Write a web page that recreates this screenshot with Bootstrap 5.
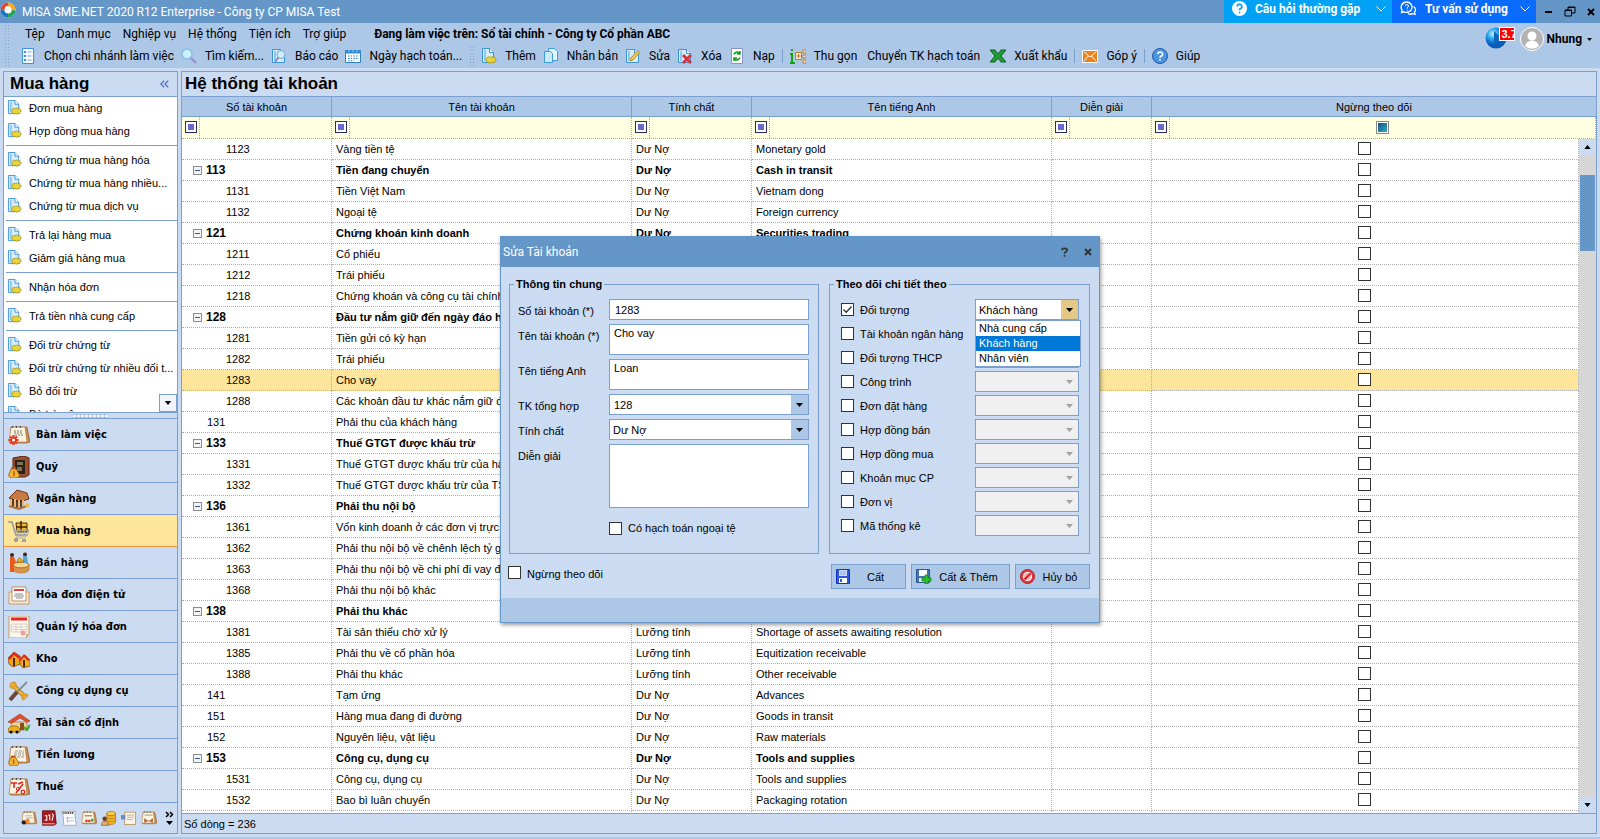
<!DOCTYPE html>
<html lang="vi">
<head>
<meta charset="utf-8">
<meta name="viewport" content="width=device-width, initial-scale=1">
<title>MISA SME.NET 2020 R12 Enterprise</title>
<link rel="stylesheet" href="https://cdn.jsdelivr.net/npm/bootstrap@5.3.0/dist/css/bootstrap.min.css">
<style>
:root{--bar:#6596c8;--tool:#adc7e7;--face:#cbdbf1;--line:#7ba0cd;--pick:#fee59c}
body{font:11px/16px "Liberation Sans",Arial,sans-serif;color:#000;background:var(--face);border-bottom:2px solid var(--tool)}
.seg{font-family:Roboto,"Noto Sans",sans-serif;font-size:12px}
svg{display:block;flex:none}
button{background:none;border:0;padding:0;color:inherit}
.titlebar{background:var(--bar);height:23px}
.promo{height:23px;font-weight:700;color:#fff;padding:0 6px 6px 8px;gap:8px;text-align:left}
.promo.faq{background:#00a2f5;width:168px}.promo.chat{background:#0a6cff;width:144px}
.toolarea{background:var(--tool);height:45px}
.grip{width:5px;height:20px;background:radial-gradient(circle,#8da2bd 1px,transparent 1px) 0 0/3px 3px}
.menu-row{height:22px;gap:12px}
.menu-row a,.side a{color:#000;text-decoration:none}
.tool-row{height:22px;gap:7px}
.tool-row button{display:flex;align-items:center;gap:8px;white-space:nowrap}
.tool-row .plain{padding:0 3px}
.tsep{width:1px;height:14px;background:var(--line)}
.panel{border:1px solid var(--line);background:var(--face)}
.panel-title{height:25px;border-bottom:1px solid var(--line);font:700 17px/24px "Liberation Sans",Arial,sans-serif;margin:0}
.side{width:175px;flex:none}
.side-list{background:#fff;overflow:hidden}
.side-list a{display:flex;align-items:center;height:23px;padding:0 0 2px 3px;gap:7px;white-space:nowrap}
.side-list hr{margin:2px 0 3px 2px;border:0;border-top:1px solid var(--line);opacity:1}
.more-btn{right:0;bottom:0;width:18px;height:18px;border:1px solid var(--line);background:#f1f5fb;display:flex;align-items:center;justify-content:center}
.splitter{height:7px;border:solid var(--line);border-width:1px 0;background:radial-gradient(circle,#fff 1px,#9ab4d8 2px) center/4px 4px repeat-x content-box;padding:0 69px}
.nav-big a{display:flex;align-items:center;gap:6px;height:32px;padding-left:4px;border-bottom:1px solid var(--line);font:700 11px/16px "DejaVu Sans Condensed","Noto Sans",sans-serif}
.nav-big a.on{background:var(--pick);border-bottom-color:#f0953c}
.mini{height:30px;padding-left:17px;gap:4px}
.grid-wrap{background:#fff;overflow:hidden}
.acct{table-layout:fixed;border-collapse:separate;border-spacing:0;width:100%}
.acct th{height:20px;padding:0;font-weight:400;text-align:center;background:var(--tool);border-right:1px solid var(--line);border-bottom:1px solid var(--line);line-height:16px}
.acct th:last-child{border-right:0}
.acct td{height:21px;padding:0 0 0 4px;border-bottom:1px dotted #b0b0b0;border-right:1px dotted #b0b0b0;line-height:16px;white-space:nowrap;overflow:hidden}
.acct td.gut{border:0;background:#fff}
.acct td.chk{padding:3px 1px 0 0;vertical-align:top}
.acct .filter td{height:22px;background:#ffffe1;padding:0;border-bottom-color:#a8a8a8}
.acct .hit td:not(.gut){background:var(--pick)}
.acct .grp td{font-weight:700}
.acct .grp td:first-child{font-size:12px}
.acct td.lv2{padding-left:25px}.acct td.lv3{padding-left:44px}.acct td.grpno{padding-left:11px}
.fop{width:18px;height:21px;border-right:1px dotted #a8a8a8;padding:0 0 1px 3px;display:flex;align-items:center}
.fop i{width:12px;height:12px;border:1px solid #2c2c66;background:#6868cc;box-shadow:inset 0 0 0 2px #fff}
.tree{width:9px;height:9px;border:1px solid #8d8d8d;background:linear-gradient(#2f5aa8,#2f5aa8) center/5px 1px no-repeat #f4f4f4}
input[type=checkbox]{appearance:none;width:13px;height:13px;margin:0;border:1px solid #333;background:#fff;flex:none;display:block}
input[type=checkbox]:checked{background:url("data:image/svg+xml,%3Csvg xmlns='http://www.w3.org/2000/svg' viewBox='0 0 11 11'%3E%3Cpath d='M1.5 5.5 4.2 8.2 9.5 2.5' fill='none' stroke='%23333' stroke-width='1.3'/%3E%3C/svg%3E") #fff}
input.tri[type=checkbox]{border-color:#888;background:linear-gradient(135deg,#0d4a78,#3fb0c8);box-shadow:inset 0 0 0 1px #fff}
.vbar{top:42px;right:0;bottom:0;width:17px;background:#d6d6d6}
.vbar span{display:flex;align-items:center;justify-content:center;height:16px;background:var(--face)}
.thumb{top:36px;left:1px;right:1px;height:76px;background:var(--bar)}
.status{height:20px;border-top:1px solid var(--line);padding-left:2px}
.dlg{top:236px;width:600px;background:var(--face);border:1px solid var(--bar);box-shadow:1px 2px 4px rgba(0,0,0,.4)}
.dlg-head{height:30px;background:var(--bar);padding:0 7px 0 2px}
.dlg-foot{height:24px;background:var(--tool)}
fieldset.box{border:1px solid var(--line);height:277px}
fieldset.box legend{float:none;width:auto;margin:0 0 7px 4px;padding:0 2px;font-size:11px;font-weight:700;line-height:15px}
.fgrid{display:grid;grid-template-columns:91px 200px;row-gap:4px;padding-left:8px}
.fgrid label{padding-top:4px}
.ctl{display:block;width:100%;height:21px;border:1px solid var(--line);border-radius:0;background-color:#fff;padding:0 5px;font:11px/14px "Liberation Sans",Arial,sans-serif;color:#000;resize:none;outline:0}
textarea.ctl{padding:1px 4px;height:31px}
textarea.ctl.tall{height:64px}
select.ctl{appearance:none;padding:0 20px 0 3px;opacity:1;background-image:url("data:image/svg+xml,%3Csvg xmlns='http://www.w3.org/2000/svg' width='17' height='19'%3E%3Cpath d='M0 0h17v19H0z' fill='%23adc7e7'/%3E%3Cpath d='M5 8h7l-3.500 4z'/%3E%3C/svg%3E");background-repeat:no-repeat;background-position:right top}
select.ctl.open{background-image:url("data:image/svg+xml,%3Csvg xmlns='http://www.w3.org/2000/svg' width='17' height='19'%3E%3Cpath d='M0 0h17v19H0z' fill='%23e3c985'/%3E%3Cpath d='M5 8h7l-3.500 4z'/%3E%3C/svg%3E")}
select.ctl:disabled{background-color:#f0f0f0;background-image:url("data:image/svg+xml,%3Csvg xmlns='http://www.w3.org/2000/svg' width='17' height='19'%3E%3Cpath d='M5 8h7l-3.500 4z' fill='%23a0a0a0'/%3E%3C/svg%3E")}
.track{display:grid;row-gap:3px;padding:0 10px 0 11px}
.track .line{display:grid;grid-template-columns:13px 1fr 104px;column-gap:6px;align-items:start;height:21px}
.track .line input{margin-top:4px}
.track .line label{padding-top:3px}
.opts{top:21px;left:0;width:106px;border:1px solid var(--line);background:#fff;list-style:none;margin:0;padding:0;line-height:15px;z-index:2}
.opts li{padding-left:3px}
.opts .sel{background:#0078d7;color:#fff}
.act{height:25px;border:1px solid var(--line);background:var(--tool);display:flex;align-items:center;padding:0 4px}
.act span{flex:1;text-align:center}
.flag{left:14px;top:0;width:16px;height:14px;background:#f00;color:#fff;border:1px solid #fff;font:700 11px/12px "Liberation Sans",sans-serif;padding-left:2px;overflow:hidden;white-space:nowrap}
</style>
</head>
<body class="d-flex flex-column vh-100 overflow-hidden position-relative">
<svg width="0" height="0" class="position-absolute">
 <defs>
  <symbol id="pg" viewBox="0 0 16 16"><path d="M1.500 1.500h8l4 4v9h-12z" fill="#d6ecfb" stroke="#3c93d6"/><path d="M9.500 1.500v4h4" fill="#fff" stroke="#3c93d6"/><path d="M3 3h2v10H3z" fill="#8cc8f0"/></symbol>
  <symbol id="doc" viewBox="0 0 16 16"><path d="M1.500.500h7l4 4v10h-11z" fill="#d6ecfb" stroke="#3c93d6"/><path d="M8.500.500v4h4" fill="#fff" stroke="#3c93d6"/><path d="M3 2h2v11H3z" fill="#8cc8f0"/><path d="M5.500 10l2-1.200 1.200.5 1.800-.8 1.400.8 2-.2v1.400l1.600 1.200-1.600 1.200-.2 1.500-1.900-.1-1.500.9-1.600-.8-1.800.5-.5-1.300-1.800-.9 1.200-1.200z" fill="#e9d437" stroke="#a8941c" stroke-width=".8"/></symbol>
  <symbol id="down" viewBox="0 0 8 5"><path d="M0 0h8L4 5z"/></symbol>
 </defs>
</svg>

<header>
 <div class="titlebar seg d-flex align-items-center text-white">
  <svg width="18" height="18" viewBox="0 0 18 18" class="mb-1"><circle cx="8" cy="9" r="7.500" fill="#fff"/><path d="M8 1.500A7.500 7.500 0 0 0 .5 9l4 .5C4.500 6 6 5 8 5z" fill="#e8452c"/><path d="M8 1.500A7.500 7.500 0 0 1 15.500 9l-4 1C12 6 10 5.500 8 5z" fill="#f7a823"/><path d="M15.500 9A7.500 7.500 0 0 1 8 16.500l-1-4c3 .5 4.500-1 4.500-3z" fill="#1ea65a"/><path d="M8 16.500A7.500 7.500 0 0 1 .5 9l4 .3c0 2 1 3 3.500 3.200z" fill="#1b74c5"/></svg>
  <span class="ps-1 flex-fill">MISA SME.NET 2020 R12 Enterprise - Công ty CP MISA Test</span>
  <button class="promo faq d-flex align-items-center"><svg width="15" height="15" viewBox="0 0 16 16"><circle cx="8" cy="8" r="8" fill="#fff"/><path d="M5.500 6a2.500 2.300 0 1 1 3.500 2c-.8.5-1 .8-1 1.800M8 11.500v1.600" fill="none" stroke="#00a2f5" stroke-width="1.700"/></svg><span class="flex-fill">Câu hỏi thường gặp</span><svg width="10" height="6" viewBox="0 0 10 6"><path d="M.5.500 5 5 9.500.500" fill="none" stroke="#fff"/></svg></button>
  <button class="promo chat d-flex align-items-center"><svg width="17" height="15" viewBox="0 0 17 15"><path d="M6.500 1a5.500 5.200 0 1 1-2.500 9.800L1.500 11.500l.6-2.400A5.500 5.200 0 0 1 6.500 1z" fill="none" stroke="#fff" stroke-width="1.300"/><path d="M13.500 5.500c2.500 1.500 2.500 4 1 5.600l.6 2.200-2.300-.6c-1.500.7-3.500.6-4.800-.2" fill="none" stroke="#fff" stroke-width="1.300"/><path d="M5.300 5a1.600 1.500 0 1 1 2 1.500v1M7.300 8.500v1" fill="none" stroke="#fff"/></svg><span class="flex-fill">Tư vấn sử dụng</span><svg width="10" height="6" viewBox="0 0 10 6"><path d="M.5.500 5 5 9.500.500" fill="none" stroke="#fff"/></svg></button>
  <div class="d-flex align-items-center justify-content-around ps-1" style="width:64px">
   <button aria-label="Thu nhỏ"><svg width="8" height="10" viewBox="0 0 8 10"><path d="M0 4h7v2H0z"/></svg></button>
   <button aria-label="Khôi phục"><svg width="12" height="11" viewBox="0 0 12 11"><path d="M1 4h6.500v6H1zM4 4V1h7v6H7.500M1 4.500h6.500M4 1.500h7" fill="none" stroke="#000"/></svg></button>
   <button aria-label="Đóng"><svg width="8" height="8" viewBox="0 0 8 8"><path d="M1 1l6 6M7 1L1 7" stroke="#000" stroke-width="2"/></svg></button>
  </div>
 </div>
 <div class="toolarea seg position-relative">
  <nav class="menu-row d-flex align-items-center ps-1">
   <i class="grip me-n2"></i>
   <a href="#" class="ps-1">Tệp</a><a href="#">Danh mục</a><a href="#">Nghiệp vụ</a><a href="#">Hệ thống</a><a href="#">Tiện ích</a><a href="#">Trợ giúp</a>
   <b class="ps-3">Đang làm việc trên: Sổ tài chính - Công ty Cổ phần ABC</b>
  </nav>
  <div class="tool-row d-flex align-items-center ps-1" id="tools"></div>
  <div class="position-absolute d-flex align-items-center" style="right:8px;top:4px">
   <div class="position-relative" style="width:35px;height:24px"><svg width="22" height="22" viewBox="0 0 22 22"><defs><radialGradient id="gl" cx=".35" cy=".3"><stop offset="0" stop-color="#c4f1ff"/><stop offset=".5" stop-color="#2ba5ee"/><stop offset="1" stop-color="#0a5cb8"/></radialGradient></defs><circle cx="11" cy="11" r="10.500" fill="url(#gl)"/><path d="M9 4l8 8-6 5-2-2z" fill="#0c65bd"/></svg><span class="flag position-absolute">3.7</span></div>
   <svg width="24" height="24" viewBox="0 0 24 24"><circle cx="12" cy="12" r="11.500" fill="#b2b2b2" stroke="#fff"/><circle cx="12" cy="9" r="4.500" fill="#fff"/><path d="M5 19c1-7 13-7 14 0a10 10 0 0 1-14 0z" fill="#fff"/></svg>
   <button class="fw-bold d-flex align-items-center" style="padding-left:3px;gap:5px">Nhung<svg width="5" height="3" viewBox="0 0 8 5"><use href="#down"/></svg></button>
  </div>
 </div>
</header>

<main class="d-flex flex-fill overflow-hidden" style="padding:3px;gap:3px">
 <aside class="panel side d-flex flex-column">
  <h1 class="panel-title d-flex align-items-center justify-content-between pe-1" style="padding-left:6px">Mua hàng<svg width="9" height="8" viewBox="0 0 11 9" class="me-1"><path d="M5 .5 1 4.500l4 4M10 .5 6 4.500l4 4" fill="none" stroke="#4a72b8" stroke-width="1.500"/></svg></h1>
  <div class="side-list flex-fill position-relative" id="list" style="height:0"></div>
  <div class="splitter"></div>
  <nav class="nav-big" id="nav"></nav>
  <div class="mini d-flex align-items-center" id="mini"></div>
 </aside>

 <section class="panel flex-fill d-flex flex-column overflow-hidden">
  <h2 class="panel-title" style="padding-left:3px">Hệ thống tài khoản</h2>
  <div class="grid-wrap flex-fill position-relative" style="height:0">
   <table class="acct">
    <colgroup><col style="width:150px"><col style="width:300px"><col style="width:120px"><col style="width:300px"><col style="width:100px"><col><col style="width:17px"></colgroup>
    <thead>
     <tr><th>Số tài khoản</th><th>Tên tài khoản</th><th>Tính chất</th><th>Tên tiếng Anh</th><th>Diễn giải</th><th colspan="2">Ngừng theo dõi</th></tr>
     <tr class="filter"><td><div class="fop"><i></i></div></td><td><div class="fop"><i></i></div></td><td><div class="fop"><i></i></div></td><td><div class="fop"><i></i></div></td><td><div class="fop"><i></i></div></td><td colspan="2"><div class="d-flex align-items-center"><div class="fop"><i></i></div><input type="checkbox" class="tri mx-auto" aria-label="Lọc ngừng theo dõi"></div></td></tr>
    </thead>
    <tbody id="rows"></tbody>
   </table>
   <div class="vbar position-absolute d-flex flex-column justify-content-between"><span><svg width="7" height="4" viewBox="0 0 8 5"><path d="M0 5h8L4 0z"/></svg></span><div class="thumb position-absolute"></div><span><svg width="7" height="4" viewBox="0 0 8 5"><use href="#down"/></svg></span></div>
  </div>
  <footer class="status d-flex align-items-center">Số dòng = 236</footer>
 </section>
</main>

<section class="dlg position-absolute start-50 translate-middle-x" role="dialog" aria-labelledby="dt">
 <div class="dlg-head d-flex align-items-center">
  <span id="dt" class="seg text-white flex-fill">Sửa Tài khoản</span>
  <button aria-label="Trợ giúp" class="me-3"><svg width="7" height="10" viewBox="0 0 8 11"><path d="M1 3.500C1 .5 7 .5 7 3.500 7 5.500 4 5 4 7.500M4 8.800V11" fill="none" stroke="#333" stroke-width="2"/></svg></button>
  <button aria-label="Đóng"><svg width="8" height="8" viewBox="0 0 8 8"><path d="M1 1l6 6M7 1L1 7" stroke="#333" stroke-width="2"/></svg></button>
 </div>
 <div class="d-flex justify-content-between" style="padding:10px 9px 0 8px">
  <fieldset class="box" style="width:310px">
   <legend>Thông tin chung</legend>
   <div class="fgrid">
    <label for="f1">Số tài khoản (*)</label><input id="f1" class="ctl" value="1283">
    <label for="f2">Tên tài khoản (*)</label><textarea id="f2" class="ctl">Cho vay</textarea>
    <label for="f3">Tên tiếng Anh</label><textarea id="f3" class="ctl">Loan</textarea>
    <label for="f4">TK tổng hợp</label><select id="f4" class="ctl ps-1"><option>128</option></select>
    <label for="f5">Tính chất</label><select id="f5" class="ctl"><option>Dư Nợ</option></select>
    <label for="f6">Diễn giải</label><textarea id="f6" class="ctl tall"></textarea>
    <div></div><div class="d-flex align-items-center pt-2" style="gap:6px"><input type="checkbox" id="f7"><label for="f7" class="p-0">Có hạch toán ngoại tệ</label></div>
   </div>
  </fieldset>
  <fieldset class="box" style="width:261px">
   <legend>Theo dõi chi tiết theo</legend>
   <div class="track" id="track"></div>
  </fieldset>
 </div>
 <div class="d-flex" style="padding:10px 9px 9px 7px;gap:5px">
  <div class="flex-fill d-flex align-items-start" style="gap:6px;padding-top:2px"><input type="checkbox" id="stop"><label for="stop">Ngừng theo dõi</label></div>
  <button class="act" style="width:75px"><svg width="14" height="15" viewBox="0 0 14 15"><path d="M.5.500h13v14H.5z" fill="#2c59e0" stroke="#1a30b8"/><path d="M3 1h8v6H3z" fill="#cfdcf8"/><path d="M3 9h8v5H3z" fill="#fff"/><path d="M4 10h2v3H4z" fill="#2c59e0"/><path d="M4 3h6M4 5h6" stroke="#8fa8e8"/></svg><span>Cất</span></button>
  <button class="act" style="width:99px"><svg width="16" height="15" viewBox="0 0 16 15"><path d="M.5.500h13v13H.5z" fill="#3f78b8" stroke="#2a568c"/><path d="M3 1h8v6H3z" fill="#fff"/><path d="M3 9h6v4H3z" fill="#dce6f2"/><path d="M9 6h3v3h3v3h-3v3H9v-3H6V9h3z" fill="#24c424" stroke="#178a17" stroke-width=".8"/></svg><span>Cất &amp; Thêm</span></button>
  <button class="act" style="width:75px"><svg width="15" height="15" viewBox="0 0 15 15"><circle cx="7.500" cy="7.500" r="7" fill="#e0383e" stroke="#b81f28"/><circle cx="7.500" cy="7.500" r="4" fill="#f4b0a8" stroke="#fff" stroke-width="1.200"/><path d="M4.500 10.500l6-6" stroke="#c8232c" stroke-width="2"/></svg><span>Hủy bỏ</span></button>
 </div>
 <div class="dlg-foot"></div>
</section>

<script>
const $ = id => document.getElementById(id);
const svg = (s, vb, body) => `<svg width="${s}" height="${s}" viewBox="0 0 ${vb} ${vb}">${body}</svg>`;
const pg = '<use href="#pg" width="16" height="16"/>';
const T = {
 list: '<path d="M2.500.500h11v15h-11z" fill="#f4faff" stroke="#3c93d6"/><path d="M4 3h2v2H4zM4 7h2v2H4zM4 11h2v2H4z" fill="#3c93d6"/><path d="M7.500 4h4M7.500 8h4M7.500 12h4" stroke="#7aa8cc"/>',
 find: '<circle cx="6" cy="6" r="5" fill="#cdeefc" stroke="#7fbfe4" stroke-width="1.400"/><path d="M10 10l5 5" stroke="#9a8fd0" stroke-width="2.400"/>',
 rep: pg + '<circle cx="10" cy="6.500" r="4" fill="#cdeefc" stroke="#7aa6cc"/><path d="M7.500 9.500L4 14" stroke="#8c86c4" stroke-width="2"/>',
 cal: '<path d="M.5 2.500h15v12H.5z" fill="#fff" stroke="#2f7fc0"/><path d="M.5 2.500h15v3H.5z" fill="#2f8fd6"/><path d="M4 1v3M8 1v3M12 1v3" stroke="#9ccdf0"/><path d="M3 8h11M3 10.500h11M3 12.800h6" stroke="#2f7fc0" stroke-dasharray="1.500 1.200"/>',
 add: '<use href="#doc" width="16" height="16"/>',
 dup: '<path d="M5.500.500h6l3 3v9h-9z" fill="#e4f4fe" stroke="#3c9ddc"/><path d="M1.500 3.500h6l2 2v9h-8z" fill="#cbeafc" stroke="#3c9ddc"/>',
 edit: pg + '<path d="M5 13l1-3 6.500-7.500 2.200 2L8 12z" fill="#f3c84a" stroke="#a8801c" stroke-width=".8"/>',
 del: pg + '<path d="M6 7l8 8M14 7l-8 8" stroke="#d8343a" stroke-width="3"/>',
 load: '<path d="M2.500.500h11v15h-11z" fill="#fff" stroke="#8a93c4"/><path d="M5 6.500c1-3 5-3 5.500-1M11 3v3H8M11 9.500c-1 3-5 3-5.500 1M5 13v-3h3" fill="none" stroke="#17a02c" stroke-width="1.600"/>',
 fold: '<path d="M0 6h3M2 6v9M0 15h5M1 2h2" stroke="#16a016" stroke-width="2"/><path d="M5.500 4.500h6v7h-6zM13 2h3v3h-3zM13 7h3v3h-3zM13 12h3v3h-3z" fill="#fbe9c8" stroke="#c07c34"/><path d="M8.500 6v4M6.500 8h4" stroke="#c07c34"/>',
 xls: '<path d="M0 2h5l3 4 3-4h5l-5 6 5 6h-5l-3-4-3 4H0l5-6z" fill="#1f9a34" stroke="#0c6420"/>',
 mail: '<path d="M.5 2.500h15v12H.5z" fill="#f0821c" stroke="#fff"/><path d="M2 4l6 5 6-5M2 13l4.500-5M14 13L9.500 8" fill="none" stroke="#fff"/>',
 help: '<circle cx="8" cy="8" r="7.500" fill="#4a94e0" stroke="#1f5aa8"/><path d="M5.700 6.300a2.400 2.200 0 1 1 3.200 2c-.7.400-.9.700-.9 1.500M8 11v1.600" fill="none" stroke="#fff" stroke-width="1.600"/>'
};
$('tools').innerHTML = [['grip','me-1'],['list','Chọn chi nhánh làm việc'],['find','Tìm kiếm...'],['rep','Báo cáo'],['cal','Ngày hạch toán...'],['grip',''],['add','Thêm'],['dup','Nhân bản'],['edit','Sửa'],['del','Xóa'],['load','Nạp'],['sep'],['fold','Thu gọn'],['','Chuyển TK hạch toán'],['xls','Xuất khẩu'],['sep'],['mail','Góp ý'],['sep'],['help','Giúp']]
 .map(([k,t]) => k==='grip' ? `<i class="grip ${t}"></i>` : k==='sep' ? '<i class="tsep"></i>' : k ? `<button>${svg(16,16,T[k])}${t}</button>` : `<button class="plain">${t}</button>`).join('');

$('list').innerHTML = ['Đơn mua hàng','Hợp đồng mua hàng','','Chứng từ mua hàng hóa','Chứng từ mua hàng nhiều...','Chứng từ mua dịch vụ','','Trả lại hàng mua','Giảm giá hàng mua','','Nhận hóa đơn','','Trả tiền nhà cung cấp','','Đối trừ chứng từ','Đối trừ chứng từ nhiều đối t...','Bỏ đối trừ','Bù trừ công nợ']
 .map(t => t ? `<a href="#"><svg width="15" height="15"><use href="#doc"/></svg>${t}</a>` : '<hr>').join('')
 + '<button class="more-btn position-absolute" aria-label="Xem thêm"><svg width="8" height="4" viewBox="0 0 8 5"><use href="#down"/></svg></button>';

const card = '<path d="M3 3h16l3 15-4 1H2z" fill="#c98a4c" stroke="#8c5a2c" stroke-width=".7"/><path d="M3 3h14l2 15H1z" fill="#fbf3e0" stroke="#b48a58" stroke-width=".8"/><path d="M4 4l1-2M8 4l1-2M12 4l1-2" stroke="#333"/>';
const bag = '<path d="M3 13h5l3 5c1 3-1 4-5 4s-6-1-5-4z" fill="#f2b632" stroke="#8f5c10" stroke-width=".8"/><path d="M3 12h5" stroke="#c4501c" stroke-width="1.600"/><path d="M6 15v5" stroke="#a02c10"/>';
const N = {
 desk: card+'<path d="M6 7h9M6 9h9M7 11h8" stroke="#777" stroke-dasharray="2 1"/><g stroke="#e8331c" stroke-width="2.200"><path d="M5.500 11v10M.5 16h10M2 12.500l7 7M9 12.500l-7 7"/></g><circle cx="5.500" cy="16" r="1.600" fill="#fff"/>',
 safe: '<path d="M5 2l11-2 5 2v17l-4 2H5z" fill="#9c4e30" stroke="#54240f"/><path d="M7 4h10v14H7z" fill="#2c2018"/><path d="M9 6h6v3H9zM9 11h5v4H9z" fill="#7c7350"/>'+bag,
 bank: '<path d="M1 10L9 2l10 3 2 6-9 3z" fill="#c87a44" stroke="#6e3614"/><path d="M3 11v7M7 11v8M11 12v8M15 12v7" stroke="#eab878" stroke-width="2.200"/><path d="M5 11v8M9 12v8M13 12v8" stroke="#3a1c0c" stroke-width="1.600"/><path d="M1 18l10 3 10-4" fill="none" stroke="#b0733c" stroke-width="2"/><circle cx="19" cy="17" r="2" fill="#f6be3a"/>',
 cart: '<path d="M0 2h4l4 13h11" fill="none" stroke="#999" stroke-width="1.600"/><path d="M8 3h11v9H9z" fill="#f0b92c" stroke="#42300c"/><path d="M13 1v11M8 7h11" stroke="#42210c" stroke-width="1.500"/><path d="M6 10h15l-2 6H8zM9 10l1 6M13 10v6M17 10l-1 6" fill="none" stroke="#a6a6ae"/><path d="M8 18h10" stroke="#aaa"/><circle cx="8" cy="20" r="1.500" fill="#ccc" stroke="#777"/><circle cx="16" cy="21" r="1.500" fill="#ccc" stroke="#777"/>',
 sell: '<ellipse cx="13" cy="13" rx="8" ry="3" fill="#f6d58c" stroke="#a9692a"/><path d="M5 13v5c2 4 14 4 16 0v-5c-2 4-14 4-16 0z" fill="#d9924a" stroke="#a9692a" stroke-width=".6"/><circle cx="4" cy="3" r="2" fill="#4a2412"/><path d="M2 5h4l2 5-2 2v8H2z" fill="#ea5a1c"/><circle cx="17" cy="2.500" r="2" fill="#4a2412"/><path d="M15 4h4l1 7h-5z" fill="#5aa6c8"/><path d="M9 10c1-5 3-5 4-3s3 0 3 3z" fill="#efae22" stroke="#7a420c" stroke-width=".5"/>',
 einv: '<path d="M1 8h20v12H1z" fill="#f6ead4" stroke="#c99a62"/><path d="M4 3h14v14H4z" fill="#fff" stroke="#b98f5e"/><path d="M6 6h10" stroke="#e02c2c" stroke-width="1.800"/><path d="M7 10h8M6 12h10M8 14h7" stroke="#888"/>',
 inv: '<path d="M1 0h20v18l-3 4H1z" fill="#fdf8ec" stroke="#c99a62"/><path d="M3 3h16" stroke="#e0282c" stroke-width="3"/><path d="M3 8h16v8H3zM3 11h16M3 13.500h16M8 8v8M13 8v8" fill="none" stroke="#c8c2bc" stroke-width=".7"/><circle cx="15" cy="17" r="2.500" fill="#eca0a0"/><path d="M21 18h-3v4z" fill="#d8a86c"/>',
 kho: '<path d="M0 10l6-6 6 4v8l-7 3-4-3z" fill="#f0a818" stroke="#7a3c08" stroke-width=".7"/><path d="M0 10l6-6 7 5-2 2-5-4-4 5z" fill="#dc2c1c"/><path d="M12 12l5-5 5 5v6l-7 2-3-3z" fill="#f0b020" stroke="#7a3c08" stroke-width=".7"/><path d="M11 12l5-6 6 6-2 1-4-4-4 5z" fill="#dc2c1c"/><path d="M6 10v8M16 12v7" stroke="#4c2606" stroke-width="2"/>',
 tool: '<path d="M3 3l15 15" stroke="#8a5a1c" stroke-width="4.200"/><path d="M3 3l15 15" stroke="#f2b63c" stroke-width="3"/><path d="M2 6a3 3 0 1 0 4-4M20 16a3 3 0 1 0-4 4" fill="none" stroke="#e3a22c" stroke-width="2.200"/><path d="M19 2L9 12" stroke="#85909e" stroke-width="2"/><path d="M9 12l-7 8" stroke="#6a4638" stroke-width="4"/>',
 home: '<path d="M3 10h16v8H4z" fill="#f1d3a0" stroke="#9a6838" stroke-width=".7"/><path d="M0 10L12 2l10 7-3 1-7-4-8 5z" fill="#e4502c" stroke="#9a2c14" stroke-width=".6"/><path d="M12 11h4v7h-4z" fill="#8a4c20"/><path d="M0 17l3-3h6l3 3v3H0z" fill="#e9b21c" stroke="#7c5408" stroke-width=".7"/><circle cx="3" cy="20" r="1.500"/><circle cx="9" cy="20" r="1.500"/><path d="M16 15l3 3 3-5" fill="none" stroke="#3ca42c" stroke-width="2"/>',
 pay: card+'<path d="M7 7h9M6 9h10M6 11h10M9 13h8" stroke="#999" stroke-dasharray="3 1"/>'+'<g transform="translate(0 1) scale(.95)">'+bag+'</g>',
 tax: card+'<path d="M3 7h6M6 7v5M10 8l5-2M8 17l7-9" stroke="#e0282c" stroke-width="1.600"/><circle cx="10" cy="13" r="1.600" fill="none" stroke="#e0282c"/><circle cx="15" cy="16" r="1.800" fill="none" stroke="#e0282c" stroke-width="1.300"/>'
};
$('nav').innerHTML = [['desk','Bàn làm việc'],['safe','Quỹ'],['bank','Ngân hàng'],['cart','Mua hàng'],['sell','Bán hàng'],['einv','Hóa đơn điện tử'],['inv','Quản lý hóa đơn'],['kho','Kho'],['tool','Công cụ dụng cụ'],['home','Tài sản cố định'],['pay','Tiền lương'],['tax','Thuế']]
 .map(([k,t]) => `<a href="#"${k==='cart'?' class="on"':''}>${svg(22,22,N[k])}${t}</a>`).join('');
const M = [
 card+'<path d="M6 8h9M7 11h9" stroke="#999"/><circle cx="4" cy="17" r="3" fill="#222"/><circle cx="9" cy="15" r="3" fill="#f08a1c"/>',
 '<path d="M2 1h17l2 18-3 2H2z" fill="#a8181c" stroke="#5e0c10"/><path d="M5 8h3v6H5M10 7h2v7M15 5l2 2-2 8" fill="none" stroke="#fff" stroke-width="1.500"/><path d="M2 19h17" stroke="#fff"/>',
 '<path d="M1 2h19l-1 5 2 14H4L3 8z" fill="#fff" stroke="#999"/><path d="M3 4h15" stroke="#222" stroke-width="2" stroke-dasharray="2 1"/><path d="M6 11h11M7 15h11M9 9v9" stroke="#aab"/>',
 card+'<path d="M5 8h10" stroke="#444"/><path d="M6 15h3M10 15h3" stroke="#e0281c" stroke-width="3"/><path d="M14 14h3" stroke="#2ca040" stroke-width="4"/>',
 '<ellipse cx="14" cy="5" rx="6" ry="3" fill="#f8cc44" stroke="#a87410"/><path d="M8 5v12c2 4 10 4 12 0V5c-2 4-10 4-12 0zM8 10c2 3 10 3 12 0M8 14c2 3 10 3 12 0" fill="#f2b42c" stroke="#a87410"/><circle cx="5" cy="12" r="3" fill="#6a3c1c"/><path d="M0 21c0-7 10-7 11 0z" fill="#e4b070" stroke="#8a5a2c"/>',
 '<path d="M5 3h15v17H5z" fill="#fdf6e6" stroke="#b5814c"/><path d="M8 7h10M8 10h10M8 13h8" stroke="#999"/><path d="M0 7h6v6H0z" fill="#6a88c4"/>',
 card+'<path d="M5 7h11" stroke="#777"/><path d="M5 12l4 3-4 2zM16 12l-4 3 4 2zM9 15h3" fill="#b0642c" stroke="#b0642c"/>'];
$('mini').innerHTML = M.map(b => svg(16,22,b)).join('') + '<svg width="9" height="14" viewBox="0 0 9 14" class="ms-1"><path d="M1 1l2.500 2.500L1 6M5 1l2.500 2.500L5 6" fill="none" stroke="#000" stroke-width="1.500"/><path d="M1 10h7l-3.500 4z"/></svg>';

const D = 'Dư Nợ', L = 'Lưỡng tính';
$('rows').innerHTML = [
 [3,1123,'Vàng tiền tệ',D,'Monetary gold'],[1,113,'Tiền đang chuyển',D,'Cash in transit'],[3,1131,'Tiền Việt Nam',D,'Vietnam dong'],[3,1132,'Ngoại tệ',D,'Foreign currency'],
 [1,121,'Chứng khoán kinh doanh',D,'Securities trading'],[3,1211,'Cổ phiếu',D,'Shares'],[3,1212,'Trái phiếu',D,'Bonds'],[3,1218,'Chứng khoán và công cụ tài chính khác',D,'Other securities'],
 [1,128,'Đầu tư nắm giữ đến ngày đáo hạn',D,'Held to maturity'],[3,1281,'Tiền gửi có kỳ hạn',D,'Term deposits'],[3,1282,'Trái phiếu',D,'Bonds'],[3,1283,'Cho vay',D,'Loan'],[3,1288,'Các khoản đầu tư khác nắm giữ đến ngày',D,'Other investments'],
 [2,131,'Phải thu của khách hàng',D,'Trade receivables'],[1,133,'Thuế GTGT được khấu trừ',D,'Deductible VAT'],[3,1331,'Thuế GTGT được khấu trừ của hàng hóa',D,'VAT on goods'],[3,1332,'Thuế GTGT được khấu trừ của TSCĐ',D,'VAT on fixed assets'],
 [1,136,'Phải thu nội bộ',D,'Internal receivables'],[3,1361,'Vốn kinh doanh ở các đơn vị trực thuộc',D,'Working capital'],[3,1362,'Phải thu nội bộ về chênh lệch tỷ giá',D,'Exchange differences'],[3,1363,'Phải thu nội bộ về chi phí đi vay đủ',D,'Borrowing costs'],[3,1368,'Phải thu nội bộ khác',D,'Other internal'],
 [1,138,'Phải thu khác',L,'Other receivables'],[3,1381,'Tài sản thiếu chờ xử lý',L,'Shortage of assets awaiting resolution'],[3,1385,'Phải thu về cổ phần hóa',L,'Equitization receivable'],[3,1388,'Phải thu khác',L,'Other receivable'],
 [2,141,'Tạm ứng',D,'Advances'],[2,151,'Hàng mua đang đi đường',D,'Goods in transit'],[2,152,'Nguyên liệu, vật liệu',D,'Raw materials'],[1,153,'Công cụ, dụng cụ',D,'Tools and supplies'],[3,1531,'Công cụ, dụng cụ',D,'Tools and supplies'],[3,1532,'Bao bì luân chuyển',D,'Packaging rotation']
].map(([l,n,a,b,c]) => `<tr class="${l===1?'grp':n===1283?'hit':''}"><td class="${l===1?'grpno':'lv'+l}">${l===1?`<span class="d-flex align-items-center gap-1"><i class="tree"></i>${n}</span>`:n}</td><td>${a}</td><td>${b}</td><td>${c}</td><td></td><td class="chk"><input type="checkbox" class="mx-auto" aria-label="Ngừng theo dõi ${n}"></td><td class="gut"></td></tr>`).join('')
 + '<tr><td></td><td></td><td></td><td></td><td></td><td></td><td class="gut"></td></tr>';

$('track').innerHTML = ['Đối tượng','Tài khoản ngân hàng','Đối tượng THCP','Công trình','Đơn đặt hàng','Hợp đồng bán','Hợp đồng mua','Khoản mục CP','Đơn vị','Mã thống kê']
 .map((t,i) => `<div class="line"><input type="checkbox" id="t${i}"${i?'':' checked'}><label for="t${i}" class="text-nowrap">${t}</label><div class="position-relative"><select class="ctl${i?'':' open'}" aria-label="${t}"${i?' disabled':''}>${i?'':'<option>Khách hàng</option>'}</select>${i?'':'<ul class="opts position-absolute" role="listbox"><li role="option">Nhà cung cấp</li><li role="option" class="sel" aria-selected="true">Khách hàng</li><li role="option">Nhân viên</li></ul>'}</div></div>`).join('');
</script>
<script src="https://cdn.jsdelivr.net/npm/bootstrap@5.3.0/dist/js/bootstrap.bundle.min.js"></script>
</body>
</html>
